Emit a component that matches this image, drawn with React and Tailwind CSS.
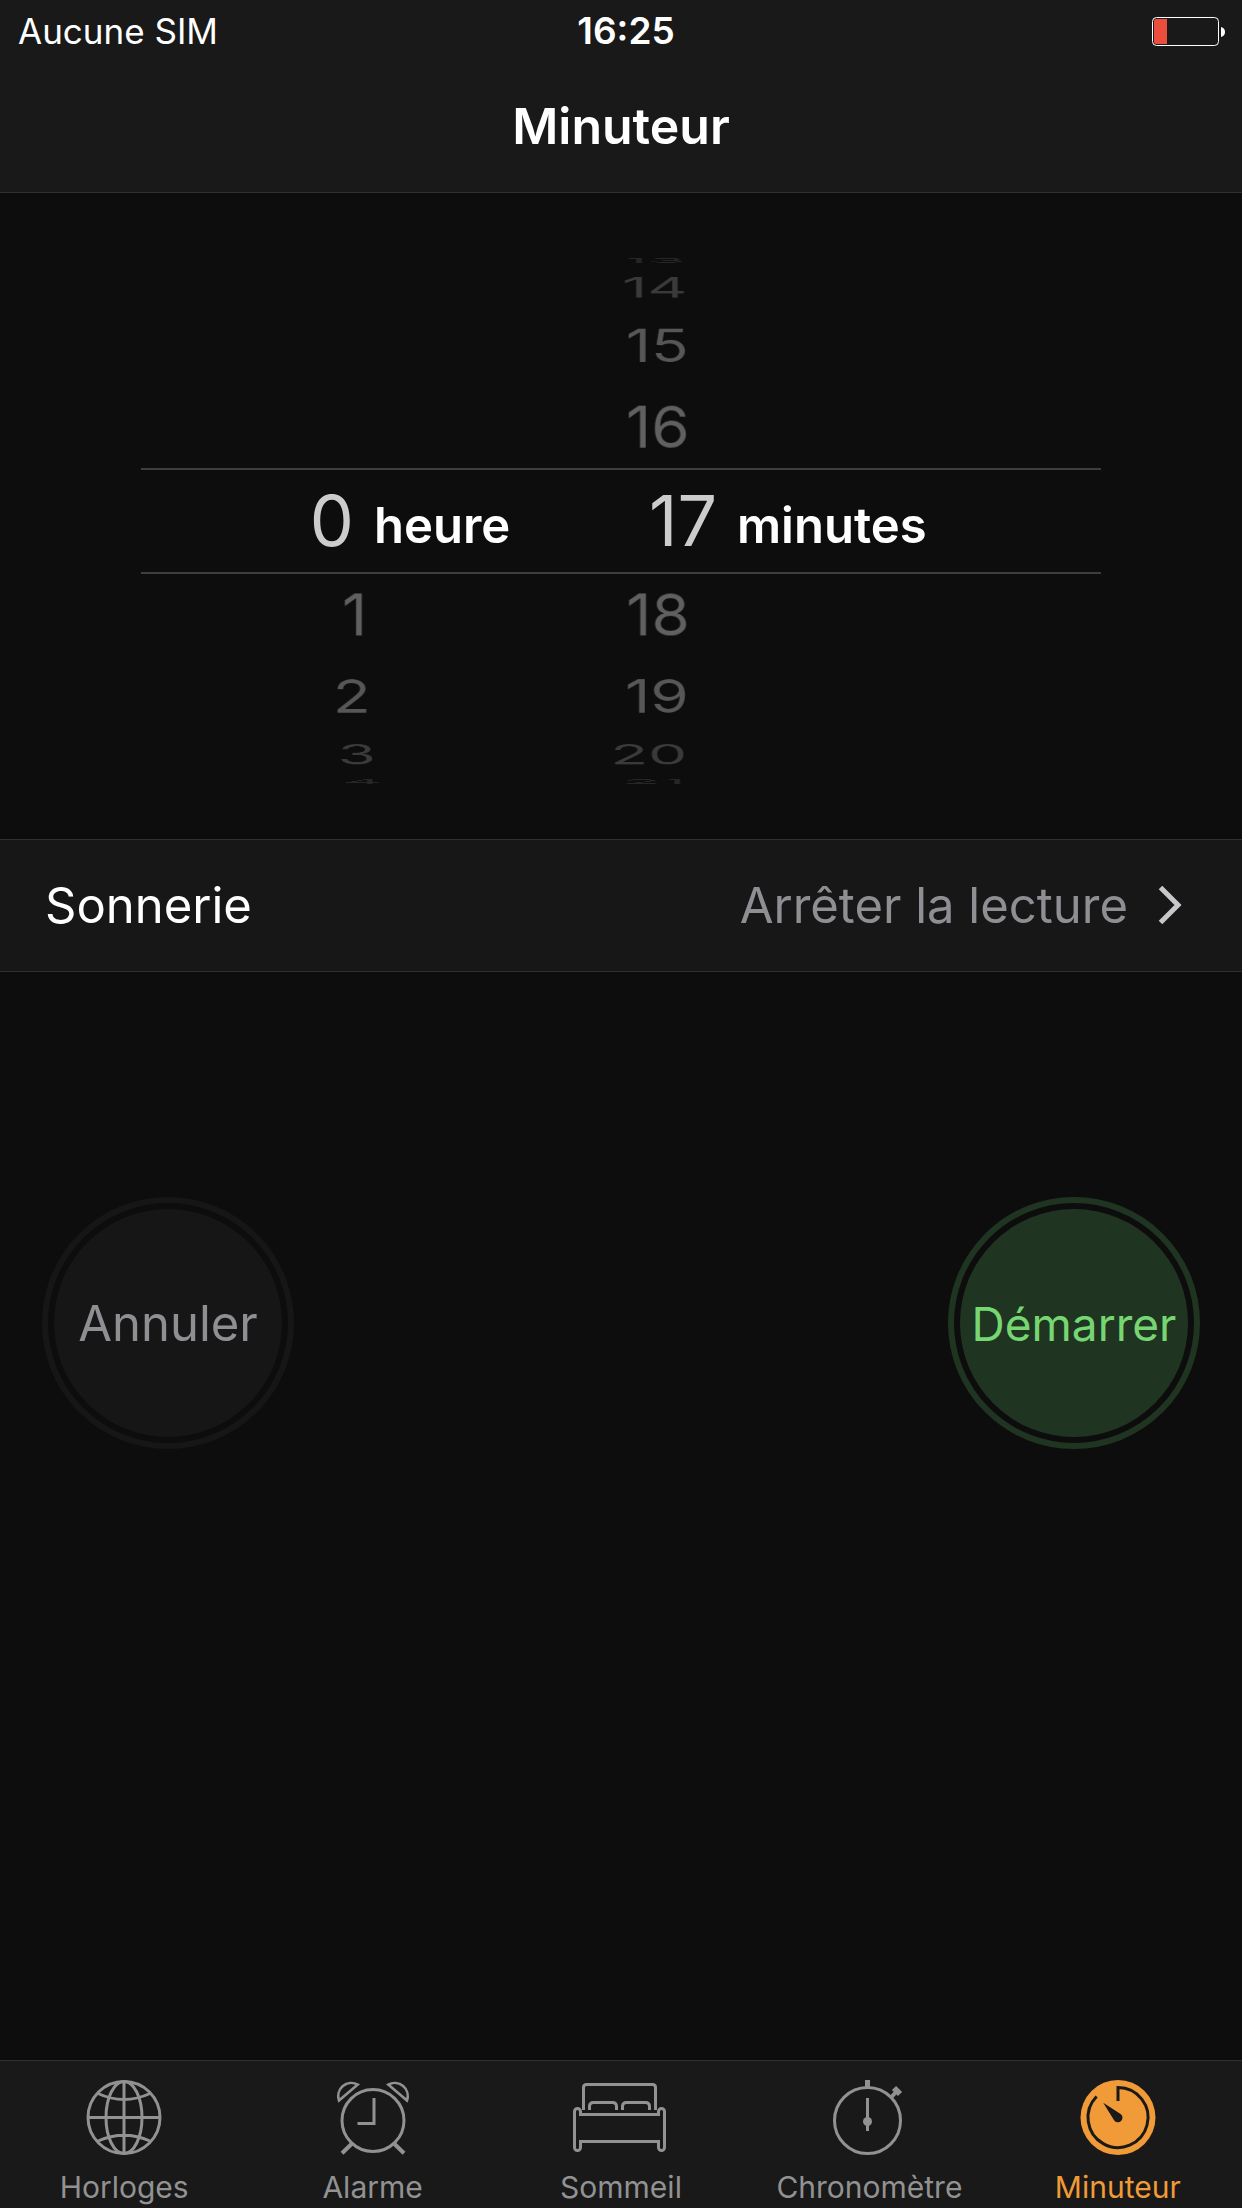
const WHEEL_RADIUS = 262;
const WHEEL_STEP = 21;

const SHADES = {
  1: "text-[#606060]",
  2: "text-[#575757]",
  3: "text-[#3a3a3a]",
  4: "text-[#262626]",
};

function wheelFace(offset, drift) {
  const angle = offset * WHEEL_STEP;
  const shift = drift * (1 - Math.cos((angle * Math.PI) / 180));
  return {
    transform: `translateX(${shift}px) rotateX(${-angle}deg) translateZ(${WHEEL_RADIUS}px)`,
  };
}

function Wheel({ label, values, value, unit, drift, numberClass }) {
  return (
    <div
      role="group"
      aria-label={label}
      className="grid w-[324px] shrink-0 items-center justify-items-start"
    >
      {values
        .filter((v) => v !== value)
        .map((v) => (
          <button
            key={v}
            type="button"
            style={wheelFace(v - value, drift)}
            className={`col-start-1 row-start-1 w-20 text-right text-[62px] leading-[72px] ${SHADES[Math.abs(v - value)]}`}
          >
            {v}
          </button>
        ))}
      <div className="col-start-1 row-start-1 flex items-end gap-5">
        <output className={`text-right text-[70px] leading-[72px] text-[#cccccc] ${numberClass}`}>{value}</output>
        <span className="text-[49px] leading-[62px] font-semibold text-white">{unit}</span>
      </div>
    </div>
  );
}

function Battery() {
  return (
    <svg className="h-[30px] w-[74px]" viewBox="0 0 74 30" role="img" aria-label="Batterie faible">
      <rect x="0.5" y="1.5" width="66" height="28" rx="4" fill="none" stroke="#fff" />
      <path d="M4 3H15V28H4Q2 28 2 26V5Q2 3 4 3Z" fill="#ec4e3d" />
      <path d="M69 11Q73 12 73 16T69 21Z" fill="#fff" />
    </svg>
  );
}

function TabIcon({ children }) {
  return (
    <svg
      className="h-[76px] w-24"
      viewBox="-48 0 96 76"
      fill="none"
      stroke="currentColor"
      strokeWidth="3"
      aria-hidden="true"
    >
      {children}
    </svg>
  );
}

const GlobeIcon = () => (
  <TabIcon>
    <circle cx="0" cy="37.5" r="36" />
    <ellipse cx="0" cy="37.5" rx="18" ry="36" />
    <path d="M0 1.5V73.5M-36 37.5H36M-26 13.5Q0 25.5 26 13.5M-26 61Q0 49.5 26 61" />
  </TabIcon>
);

const AlarmIcon = () => (
  <TabIcon>
    <circle cx="0" cy="40.5" r="31" />
    <path d="M1 18V43.5H-15.5" />
    <path d="M-15.2 4.6A13.2 13.2 0 0 0 -34 20.6ZM15.2 4.6A13.2 13.2 0 0 1 34 20.6Z" strokeWidth="2.6" />
    <path d="M-21 63.5L-31 73.3M21 63.5L31 73.3" strokeWidth="4" />
  </TabIcon>
);

const BedIcon = () => (
  <TabIcon>
    <path d="M-37.5 30V7.5Q-37.5 4.5 -34.5 4.5H31.5Q34.5 4.5 34.5 7.5V30" />
    <path d="M-31.5 30V26.5Q-31.5 22.5 -27.5 22.5H-8.5Q-4.5 22.5 -4.5 26.5V30M1.5 30V26.5Q1.5 22.5 5.5 22.5H24.5Q28.5 22.5 28.5 26.5V30" />
    <path d="M-46.5 31.5a3 3 0 0 1 6 0V34.5H37.5V31.5a3 3 0 0 1 6 0V67.5a3 3 0 0 1 -6 0V61.5H-40.5V67.5a3 3 0 0 1 -6 0Z" />
  </TabIcon>
);

const StopwatchIcon = () => (
  <TabIcon>
    <circle cx="-1.5" cy="40.5" r="33" />
    <path d="M-1.5 0V8" strokeWidth="5" />
    <path d="M25 8L31 14" strokeWidth="6" />
    <path d="M22.5 17L27.5 11.5" strokeWidth="4" />
    <path d="M-1.5 18V51" />
    <circle cx="-1.5" cy="41.5" r="4.5" fill="currentColor" stroke="none" />
  </TabIcon>
);

const TimerIcon = () => (
  <TabIcon>
    <circle cx="0" cy="37.5" r="37.5" fill="currentColor" stroke="none" />
    <path d="M0 21V7.5A30 30 0 1 1 -21.4 16.5" stroke="#191919" />
    <path d="M-14.8 22.8L2.6 33.9A4.6 4.6 0 1 1 -3.9 40.2Z" fill="#191919" stroke="none" />
  </TabIcon>
);

const TABS = [
  { name: "Horloges", Icon: GlobeIcon },
  { name: "Alarme", Icon: AlarmIcon },
  { name: "Sommeil", Icon: BedIcon },
  { name: "Chronomètre", Icon: StopwatchIcon },
  { name: "Minuteur", Icon: TimerIcon, active: true },
];

export default function App() {
  return (
    <div className="flex min-h-screen flex-col bg-[#0d0d0d] font-['Inter','Liberation_Sans',sans-serif] text-white">
      <header className="border-b border-[#303030] bg-[#191919]">
        <div className="grid grid-cols-3 items-center pr-4 pl-[18px] pt-px text-[35px] leading-[60px]">
          <span>Aucune SIM</span>
          <time className="pl-2 text-center text-[37px] font-semibold">16:25</time>
          <span className="justify-self-end">
            <Battery />
          </span>
        </div>
        <h1 className="pb-px text-center text-[50px] leading-[130px] font-semibold">Minuteur</h1>
      </header>

      <main className="flex flex-1 flex-col">
        <section aria-label="Durée" className="px-8 pt-[275px] pb-[265px]">
          <div className="mx-auto flex h-[106px] max-w-[960px] border-y-2 border-[#3e3e3e] pl-[145px]">
            <Wheel
              label="Heures"
              values={[0, 1, 2, 3, 4]}
              value={0}
              unit="heure"
              drift={18}
              numberClass="w-[68px]"
            />
            <Wheel
              label="Minutes"
              values={[13, 14, 15, 16, 17, 18, 19, 20, 21]}
              value={17}
              unit="minutes"
              drift={-5}
              numberClass="w-[107px]"
            />
          </div>
        </section>

        <button
          type="button"
          className="flex w-full items-center border-y border-[#303030] bg-[#171717] pr-[60px] pl-[45px] text-[49px] leading-[131px]"
        >
          <span>Sonnerie</span>
          <span className="ml-auto text-[#8e8e93]">Arrêter la lecture</span>
          <svg className="ml-[30px] h-10 w-6" viewBox="0 0 24 40" fill="none" aria-hidden="true">
            <path d="M2.5 1.5L20 19L2.5 36.5" stroke="#c7c7cc" strokeWidth="5" />
          </svg>
        </button>

        <div className="flex justify-between px-[42px] pt-[225px]">
          <button
            type="button"
            className="size-[252px] rounded-full border-6 border-[#161616] p-1.5 text-[49px] text-[#8e8e93]"
          >
            <span className="flex size-full items-center justify-center rounded-full bg-[#161616] pt-0.5">Annuler</span>
          </button>
          <button
            type="button"
            className="size-[252px] rounded-full border-6 border-[#203422] p-1.5 text-[46px] text-[#76d772]"
          >
            <span className="flex size-full items-center justify-center rounded-full bg-[#203422] pt-0.5">Démarrer</span>
          </button>
        </div>
      </main>

      <nav className="grid grid-cols-5 border-t border-[#303030] bg-[#191919]">
        {TABS.map(({ name, Icon, active }) => (
          <a
            key={name}
            href={`#${name.toLowerCase()}`}
            aria-current={active ? "page" : undefined}
            className={`flex flex-col items-center gap-[13px] pt-[19px] pb-[3px] text-3xl ${active ? "text-[#f19a38]" : "text-[#929292]"}`}
          >
            <Icon />
            <span className="leading-9">{name}</span>
          </a>
        ))}
      </nav>
    </div>
  );
}
